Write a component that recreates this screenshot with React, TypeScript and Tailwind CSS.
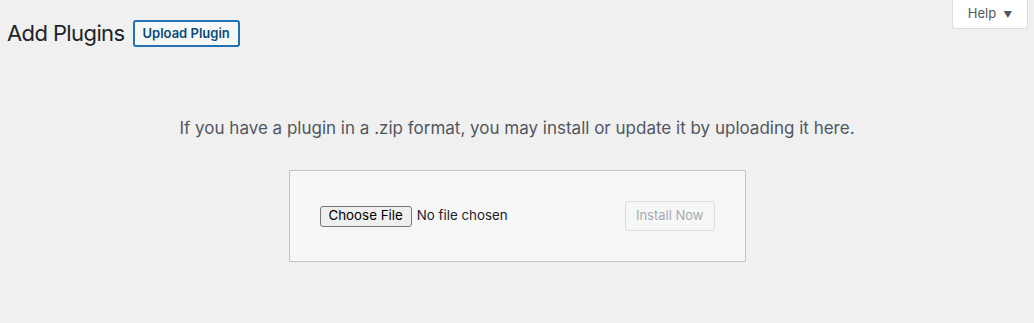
export default function App() {
  return (
    <div className="min-h-[323px] bg-[#f0f0f1] font-['Inter',sans-serif] text-[#3c434a]">
      {/* Top bar: title + help tab */}
      <div className="flex items-start justify-between pl-[7px] pr-[6px]">
        <div className="flex items-center gap-[8px] pt-[18px]">
          <h1 className="text-[22px] leading-[31px] tracking-[-0.6px] font-normal text-[#1d2327]">Add Plugins</h1>
          <button className="h-[27px] px-[8px] rounded-[3px] border-2 border-[#2271b1] bg-[#f6f7f7] text-[13px] font-semibold text-[#0a4b78]">
            Upload Plugin
          </button>
        </div>
        <button className="flex items-center gap-[7px] h-[29px] w-[76px] justify-center bg-white border border-t-0 border-[#dcdcde] rounded-b-[4px] text-[13px] text-[#50575e]">
          Help
          <span className="text-[9px] leading-none">▼</span>
        </button>
      </div>

      {/* Upload section */}
      <div className="flex flex-col items-center pt-[67px]">
        <p className="text-[17px] leading-[24px] text-[#50575e]">
          If you have a plugin in a .zip format, you may install or update it by uploading it here.
        </p>
        <form className="mt-[30px] w-[457px] flex items-center justify-between p-[30px] bg-[#f6f7f7] border border-[#c3c4c7]">
          <div className="flex items-center gap-[5px] text-[13.33px]">
            <span className="h-[21px] px-[8px] flex items-center rounded-[3px] border border-[#767676] bg-[#efefef] text-black">
              Choose File
            </span>
            <span className="text-[#1d2327]">No file chosen</span>
          </div>
          <button
            disabled
            className="h-[30px] px-[10px] rounded-[3px] border border-[#dcdcde] bg-[#f6f7f7] text-[13px] text-[#a7aaad]"
          >
            Install Now
          </button>
        </form>
      </div>
    </div>
  );
}
